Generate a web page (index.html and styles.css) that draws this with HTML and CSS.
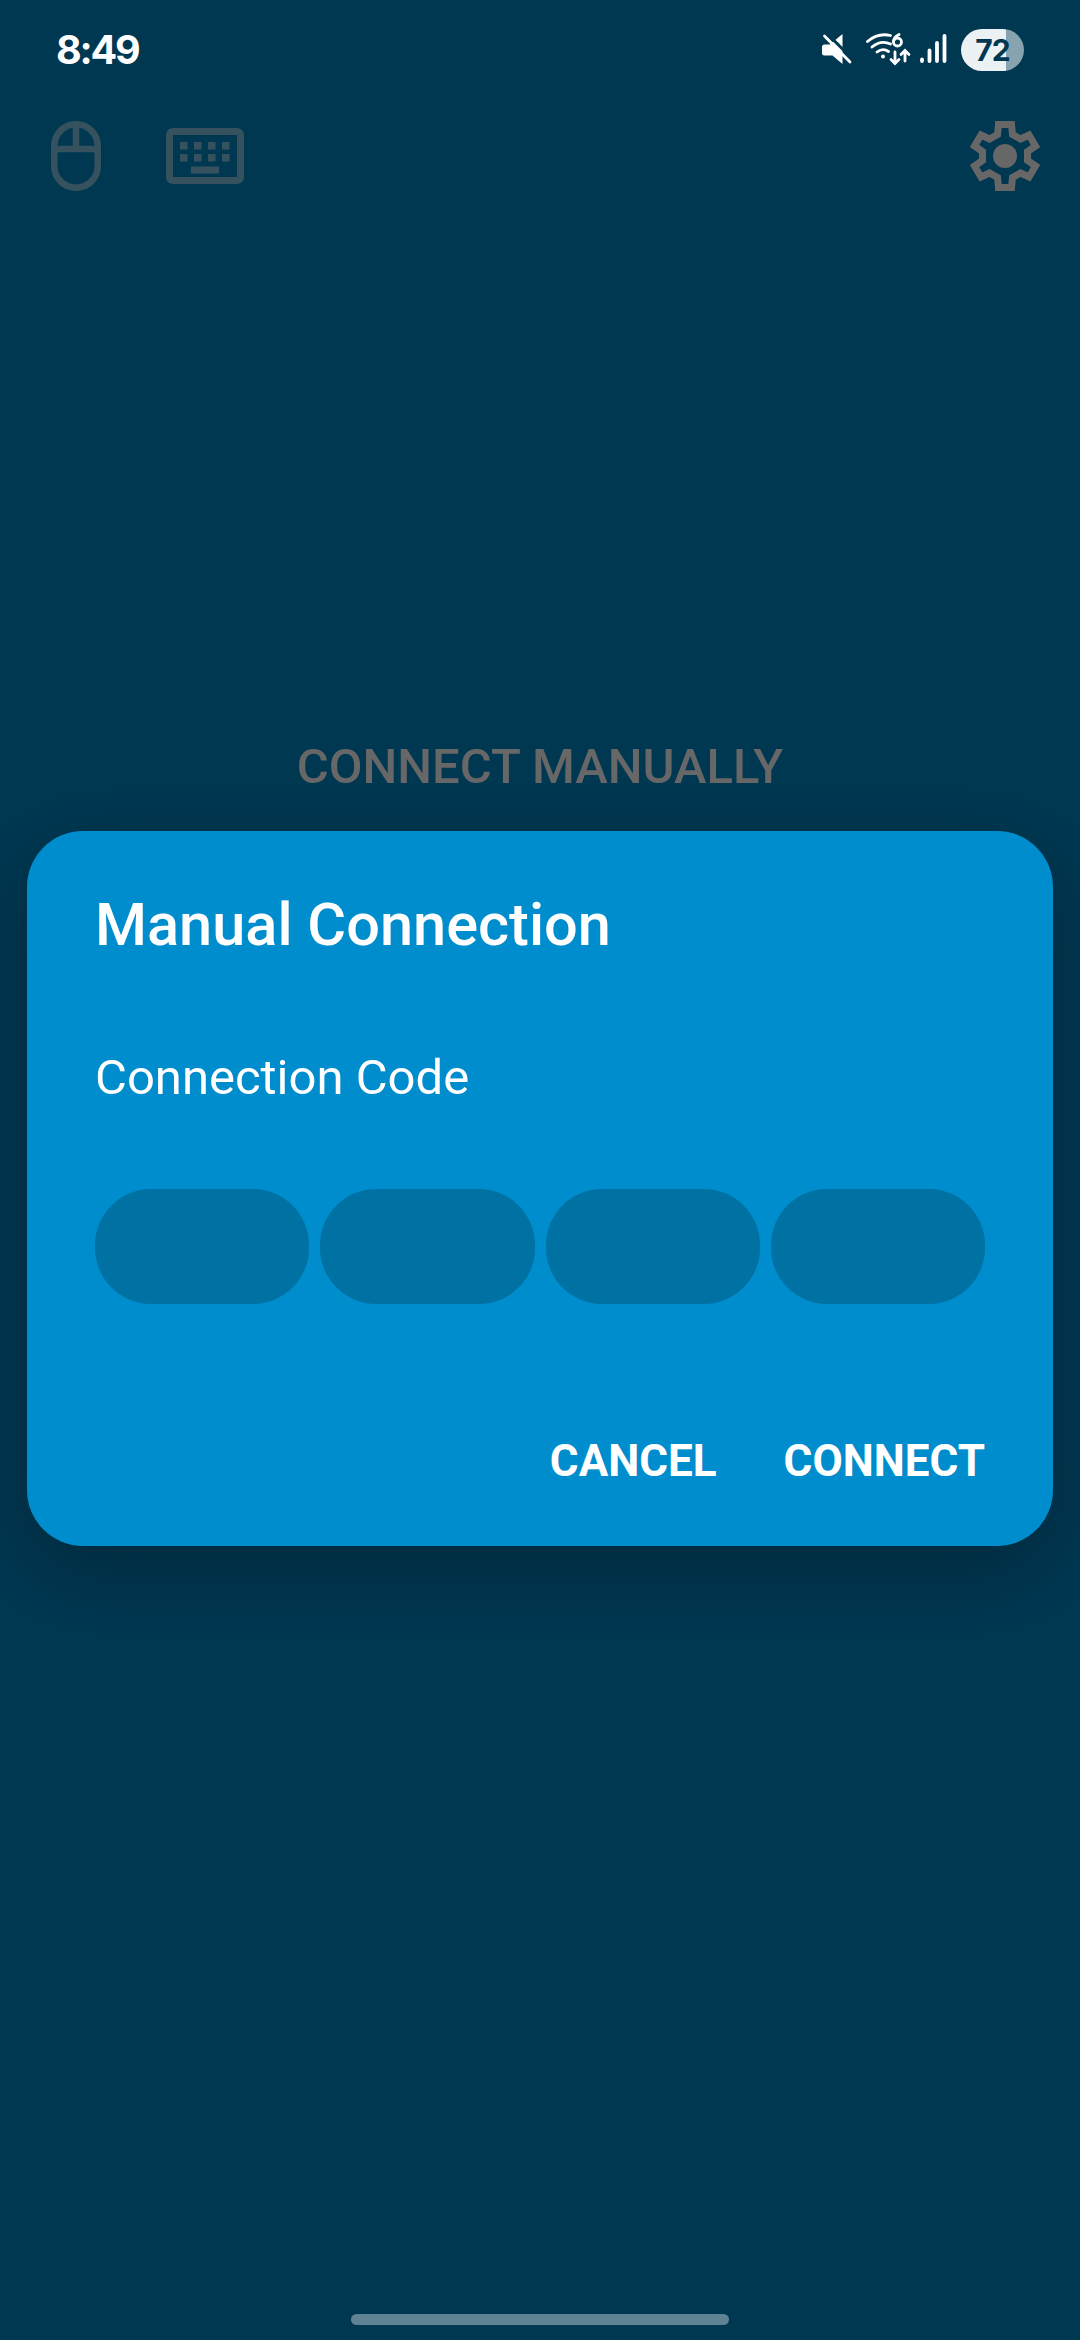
FILE: index.html
```html
<!DOCTYPE html>
<html lang="en">
<head>
<meta charset="utf-8">
<title>Manual Connection</title>
<link rel="stylesheet" href="styles.css">
</head>
<body>
<div class="screen">
  <header class="status">
    <span class="clock">8:49</span>
    <svg class="status-icons" viewBox="0 0 130 34" fill="none" stroke="#fff" stroke-linecap="round">
      <path d="M12.500 8.500L21.500 1V31L11.500 22.500H3.500Q1 22.500 1 20V14Q1 11.500 3.500 11.500H9Z" fill="#fff" stroke="none"/>
      <path d="M6 .5L33 27.500" stroke="#003852" stroke-width="3"/>
      <path d="M3.500 3L29 29" stroke-width="2.800"/>
      <g stroke-width="2.800">
        <path d="M46.500 8.500Q57-.5 69.500 2.500M51 14Q60 6.500 69.500 11M56 19Q62 14.500 67.500 18.500"/>
        <circle cx="62" cy="23.500" r="2" fill="#fff" stroke="none"/>
        <path d="M78 1.500Q72.500 4 72.500 9"/><circle cx="76.500" cy="9" r="4"/>
        <path d="M74 19V30M70 26.500L74 30.500L78 26.500M84 28V18M80 21.500L84 17.500L88 21.500"/>
      </g>
      <path d="M101 26.500V28M108.500 17.500V28M116 10V28M123.500 3V28" stroke-width="3.800"/>
    </svg>
    <span class="battery">72</span>
  </header>
  <nav class="toolbar">
    <svg class="mouse" viewBox="0 0 50 70" fill="none" stroke="#36525f" stroke-width="6.500"><rect x="3.250" y="3.250" width="43.500" height="63.500" rx="21.750"/><path d="M3 28H47M25 3V28"/></svg>
    <svg class="keyboard" viewBox="0 0 78 56"><rect x="3.500" y="3.500" width="71" height="49" rx="3.500" fill="none" stroke="#36525f" stroke-width="7"/><path d="M14 14h7.500v7.500h-7.500zM28 14h7.500v7.500h-7.500zM42 14h7.500v7.500h-7.500zM56 14h7.500v7.500h-7.500zM14 26h7.500v7.500h-7.500zM28 26h7.500v7.500h-7.500zM42 26h7.500v7.500h-7.500zM56 26h7.500v7.500h-7.500zM25 38.500h28v7h-28z" fill="#36525f"/></svg>
    <svg class="gear" viewBox="0 0 70 70"><path d="M28.500 3.500H41.500L42.500 13.500L50.500 18L59 14L65.500 25L57.500 30.500V39.500L65.500 45L59 56L50.500 52L42.500 56.500L41.500 66.500H28.500L27.500 56.500L19.500 52L11 56L4.500 45L12.500 39.500V30.500L4.500 25L11 14L19.500 18L27.500 13.500Z" fill="none" stroke="#676767" stroke-width="7"/><circle cx="35" cy="35" r="12" fill="#676767"/></svg>
  </nav>
  <main class="content">
    <div class="manual">CONNECT MANUALLY</div>
    <section class="dialog">
      <h1 class="title">Manual Connection</h1>
      <div class="label">Connection Code</div>
      <div class="fields"><span class="field"></span><span class="field"></span><span class="field"></span><span class="field"></span></div>
      <div class="actions"><span class="cancel">CANCEL</span><span class="connect">CONNECT</span></div>
    </section>
  </main>
  <div class="home"></div>
</div>
</body>
</html>
```
FILE: styles.css
```css
* { box-sizing: border-box; }
body { margin: 0; background: #003852; font-family: Roboto, sans-serif; }
.screen { width: 1080px; height: 2340px; overflow: hidden; background: #003852; display: flex; flex-direction: column; align-items: center; }
.status { width: 1080px; height: 100px; padding: 0 56px; display: flex; align-items: center; color: #fff; }
.clock { font: 700 39.500px/48px Inter, sans-serif; letter-spacing: -2.200px; flex: 1; }
.status-icons { width: 130px; height: 34px; margin-right: 10px; }
.battery { width: 63px; height: 42px; border-radius: 21px; background: linear-gradient(90deg, #ecf1f4 45px, #87a3b0 45px); color: #003852; font: 700 30px/42px Inter, sans-serif; text-align: center; letter-spacing: -1px; }
.toolbar { width: 1080px; height: 112px; padding: 0 40px 0 51px; display: flex; align-items: center; }
.mouse { width: 50px; height: 70px; }
.keyboard { width: 78px; height: 56px; margin-left: 65px; margin-right: auto; }
.gear { width: 70px; height: 70px; }
.content { width: 1026px; flex: 1; padding-top: 524px; }
.manual { height: 95px; padding-top: 2px; text-align: center; color: #676767; font-size: 49px; line-height: 58px; font-weight: 500; }
.dialog { height: 715px; border-radius: 56px; background: #008dcd; padding: 58px 68px 0; color: #fff; box-shadow: 0 24px 84px rgba(0, 0, 0, .28); }
.title { margin: 0; font-size: 59.500px; line-height: 72px; font-weight: 500; }
.label { margin-top: 89px; font-size: 49px; line-height: 56px; }
.fields { margin-top: 83px; display: grid; grid-template-columns: repeat(4, 1fr); gap: 11px; }
.field { height: 115px; border-radius: 56px; background: #0071a3; }
.actions { margin-top: 131px; display: flex; justify-content: flex-end; gap: 67px; font-size: 44px; line-height: 52px; font-weight: 700; }
.home { width: 378px; height: 11px; margin-bottom: 15px; border-radius: 6px; background: #5f8394; }
```
